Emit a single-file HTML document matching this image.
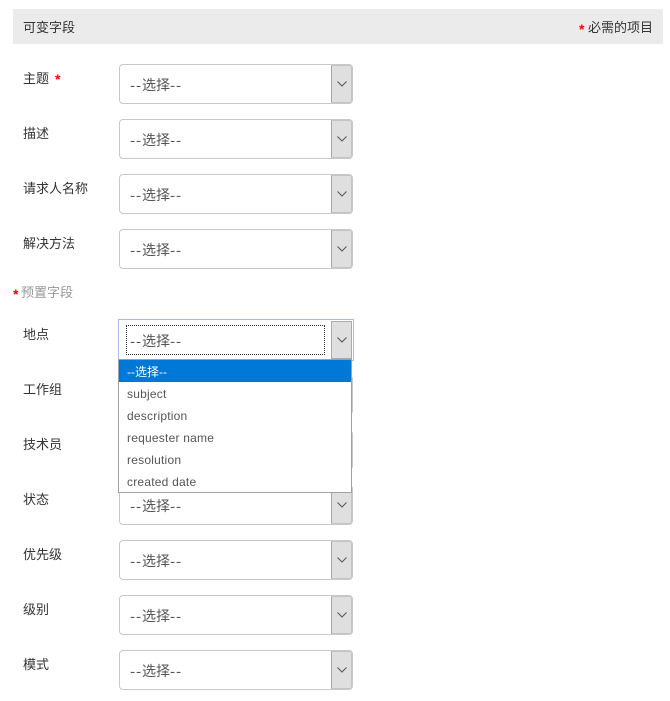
<!DOCTYPE html>
<html><head><meta charset="utf-8"><style>
html,body{margin:0;padding:0;background:#fff}
body{width:670px;height:701px;position:relative;overflow:hidden;font-family:"Liberation Sans","WenQuanYi Zen Hei","Noto Sans CJK SC",sans-serif;font-size:13px;color:#333}
.a{position:absolute;white-space:nowrap}
.bar{left:13px;top:9px;width:650px;height:35px;background:#ebebeb}
.l{left:23px;line-height:18px}
.r{color:#f00;font-size:14px;font-weight:bold;line-height:12px}
.s{position:absolute;left:119px;width:232px;height:38px;border:1px solid #c8c8c8;border-radius:4px;background:#fff}
.s .t{position:absolute;left:10px;top:10px;line-height:20px;font-size:14px;color:#555}
.t i{font-style:normal;display:inline-block;width:12px;letter-spacing:.8px;transform:scaleX(1.1);transform-origin:left center}
.s .b{position:absolute;right:0;top:0;width:19px;height:36px;background:#dfdfdf;border:1px solid #c4c4c4;border-left-color:#a6a6a6;border-radius:0 3px 3px 0}
.s svg{position:absolute;left:5px;top:15px}
.f{position:absolute;left:118px;top:319px;width:234px;height:40px;border:1px solid #a8b8ee;background:#fff}
.f .d{position:absolute;left:7px;top:5px;width:197px;height:28px;border:1px dotted #333}
.f .t{position:absolute;left:11px;top:11px;line-height:20px;font-size:14px;color:#555}
.f .b{position:absolute;left:212px;top:1px;width:21px;height:38px;background:#dfdfdf;border:1px solid #aaa;box-sizing:border-box}
.f svg{position:absolute;left:5px;top:15px}
.m{position:absolute;left:118px;top:359px;width:232px;height:132px;border:1px solid #a0a0a0;background:#fff;font-size:12px;color:#555;letter-spacing:.22px}
.m div{height:22px;line-height:24px;padding-left:8px}
.m .o{background:#0078d7;color:#fff;letter-spacing:0}
</style></head><body>
<div class="a bar"></div>
<div class="a l" style="top:19px">可变字段</div>
<div class="a r" style="left:579px;top:23px">*</div>
<div class="a l" style="left:588px;top:19px">必需的项目</div>

<div class="a l" style="top:70px">主题</div><div class="a r" style="left:55px;top:73px">*</div>
<div class="a l" style="top:125px">描述</div>
<div class="a l" style="top:180px">请求人名称</div>
<div class="a l" style="top:235px">解决方法</div>
<div class="a r" style="left:13px;top:288px">*</div>
<div class="a l" style="left:21px;top:284px;color:#999">预置字段</div>
<div class="a l" style="top:326px">地点</div>
<div class="a l" style="top:381px">工作组</div>
<div class="a l" style="top:436px">技术员</div>
<div class="a l" style="top:491px">状态</div>
<div class="a l" style="top:546px">优先级</div>
<div class="a l" style="top:601px">级别</div>
<div class="a l" style="top:656px">模式</div>

<div class="s" style="top:64px"><span class="t"><i>--</i>选择<i>--</i></span><span class="b"><svg width="10" height="6" viewBox="0 0 10 6"><path d="M.5 .5L5 5L9.5 .5" fill="none" stroke="#555" stroke-width="1"/></svg></span></div>
<div class="s" style="top:119px"><span class="t"><i>--</i>选择<i>--</i></span><span class="b"><svg width="10" height="6" viewBox="0 0 10 6"><path d="M.5 .5L5 5L9.5 .5" fill="none" stroke="#555" stroke-width="1"/></svg></span></div>
<div class="s" style="top:174px"><span class="t"><i>--</i>选择<i>--</i></span><span class="b"><svg width="10" height="6" viewBox="0 0 10 6"><path d="M.5 .5L5 5L9.5 .5" fill="none" stroke="#555" stroke-width="1"/></svg></span></div>
<div class="s" style="top:229px"><span class="t"><i>--</i>选择<i>--</i></span><span class="b"><svg width="10" height="6" viewBox="0 0 10 6"><path d="M.5 .5L5 5L9.5 .5" fill="none" stroke="#555" stroke-width="1"/></svg></span></div>

<div class="s" style="top:375px"><span class="b"></span></div>
<div class="s" style="top:430px"><span class="b"></span></div>
<div class="s" style="top:485px"><span class="t"><i>--</i>选择<i>--</i></span><span class="b"><svg width="10" height="6" viewBox="0 0 10 6"><path d="M.5 .5L5 5L9.5 .5" fill="none" stroke="#555" stroke-width="1"/></svg></span></div>
<div class="s" style="top:540px"><span class="t"><i>--</i>选择<i>--</i></span><span class="b"><svg width="10" height="6" viewBox="0 0 10 6"><path d="M.5 .5L5 5L9.5 .5" fill="none" stroke="#555" stroke-width="1"/></svg></span></div>
<div class="s" style="top:595px"><span class="t"><i>--</i>选择<i>--</i></span><span class="b"><svg width="10" height="6" viewBox="0 0 10 6"><path d="M.5 .5L5 5L9.5 .5" fill="none" stroke="#555" stroke-width="1"/></svg></span></div>
<div class="s" style="top:650px"><span class="t"><i>--</i>选择<i>--</i></span><span class="b"><svg width="10" height="6" viewBox="0 0 10 6"><path d="M.5 .5L5 5L9.5 .5" fill="none" stroke="#555" stroke-width="1"/></svg></span></div>

<div class="f"><span class="d"></span><span class="t"><i>--</i>选择<i>--</i></span><span class="b"><svg width="10" height="6" viewBox="0 0 10 6"><path d="M.5 .5L5 5L9.5 .5" fill="none" stroke="#555" stroke-width="1.1"/></svg></span></div>
<div class="m"><div class="o">--选择--</div><div>subject</div><div>description</div><div>requester name</div><div>resolution</div><div>created date</div></div>
</body></html>
